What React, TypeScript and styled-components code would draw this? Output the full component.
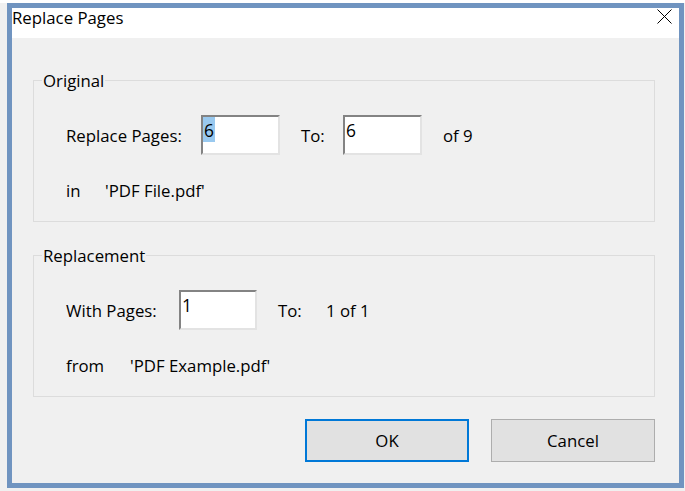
import React from "react";
import styled, { createGlobalStyle } from "styled-components";

const GlobalStyle = createGlobalStyle`
  html, body { margin: 0; padding: 0; }
  body {
    background: #f0f0f0;
    font-family: "Open Sans", "Noto Sans", sans-serif;
    color: #000;
  }
`;

const FONT = "16.8px";

const Page = styled.div`
  padding: 3px 1px 3px 7px;
  background: linear-gradient(#ffffff 0 3px, #f0f0f0 3px);
  min-height: 491px;
  box-sizing: border-box;
`;

const Window = styled.div`
  box-sizing: border-box;
  width: 677px;
  height: 485px;
  border: 5px solid #7094c0;
  background: #f0f0f0;
  display: flex;
  flex-direction: column;
`;

const TitleBar = styled.div`
  height: 30px;
  flex: none;
  background: #ffffff;
  display: flex;
  justify-content: space-between;
  align-items: flex-start;
`;

const Title = styled.div`
  font-size: ${FONT};
  line-height: 22px;
  margin-top: -1px;
`;

const CloseIcon = styled.svg`
  width: 15px;
  height: 15px;
  margin-top: 1px;
  margin-right: 7px;
`;

const Content = styled.div`
  flex: 1;
  padding: 42px 24px 0 21px;
  display: flex;
  flex-direction: column;
`;

const GroupBox = styled.div<{ $mt?: number }>`
  position: relative;
  margin-top: ${(p) => p.$mt ?? 0}px;
  border: 1px solid #dcdcdc;
  padding: 34px 0 20px 32px;
  display: flex;
  flex-direction: column;
  gap: 24px;
`;

const Legend = styled.span`
  position: absolute;
  top: -11px;
  left: 8px;
  padding: 0 1px;
  background: #f0f0f0;
  font-size: ${FONT};
  line-height: 22px;
`;

const Row = styled.div<{ $h: number }>`
  display: flex;
  align-items: center;
  height: ${(p) => p.$h}px;
`;

const Label = styled.span<{ $w?: number; $ml?: number }>`
  flex: none;
  width: ${(p) => (p.$w ? `${p.$w}px` : "auto")};
  margin-left: ${(p) => p.$ml ?? 0}px;
  font-size: ${FONT};
  line-height: 22px;
  white-space: nowrap;
  padding-top: 2px;
`;

const TextBox = styled.div<{ $w: number }>`
  flex: none;
  box-sizing: border-box;
  width: ${(p) => p.$w}px;
  height: 40px;
  background: #ffffff;
  border: 2px solid;
  border-color: #838383 #e3e3e3 #e3e3e3 #838383;
  font-size: 17.4px;
  line-height: 25px;
  padding-left: 0;
  align-self: flex-start;
`;

const BoxText = styled.span<{ $selected?: boolean }>`
  display: inline-block;
  line-height: 23px;
  padding: 2px 1px 0 1px;
  background: ${(p) => (p.$selected ? "#99c9ef" : "transparent")};
`;

const ButtonRow = styled.div`
  display: flex;
  justify-content: flex-end;
  gap: 22px;
  margin-top: 22px;
`;

const Button = styled.button<{ $primary?: boolean }>`
  box-sizing: border-box;
  width: 164px;
  height: 43px;
  background: #e1e1e1;
  border: ${(p) => (p.$primary ? "2px solid #0078d7" : "1px solid #adadad")};
  border-radius: 0;
  font-family: "Open Sans", "Noto Sans", sans-serif;
  font-size: ${FONT};
  color: #000;
  padding: 0;
`;

export default function App() {
  return (
    <>
      <GlobalStyle />
      <Page>
        <Window>
          <TitleBar>
            <Title>Replace Pages</Title>
            <CloseIcon viewBox="0 0 15 15">
              <path d="M0.5 0.5 L14.5 14.5 M14.5 0.5 L0.5 14.5" stroke="#000" strokeWidth="1" fill="none" />
            </CloseIcon>
          </TitleBar>
          <Content>
            <GroupBox>
              <Legend>Original</Legend>
              <Row $h={40}>
                <Label $w={135}>Replace Pages:</Label>
                <TextBox $w={79}>
                  <BoxText $selected>6</BoxText>
                </TextBox>
                <Label $w={42} $ml={21}>To:</Label>
                <TextBox $w={79}>
                  <BoxText>6</BoxText>
                </TextBox>
                <Label $ml={21}>of 9</Label>
              </Row>
              <Row $h={22}>
                <Label $w={39}>in</Label>
                <Label>'PDF File.pdf'</Label>
              </Row>
            </GroupBox>
            <GroupBox $mt={33}>
              <Legend>Replacement</Legend>
              <Row $h={40}>
                <Label $w={113}>With Pages:</Label>
                <TextBox $w={78}>
                  <BoxText>1</BoxText>
                </TextBox>
                <Label $w={48} $ml={21}>To:</Label>
                <Label>1 of 1</Label>
              </Row>
              <Row $h={22}>
                <Label $w={64}>from</Label>
                <Label>'PDF Example.pdf'</Label>
              </Row>
            </GroupBox>
            <ButtonRow>
              <Button $primary>OK</Button>
              <Button>Cancel</Button>
            </ButtonRow>
          </Content>
        </Window>
      </Page>
    </>
  );
}
